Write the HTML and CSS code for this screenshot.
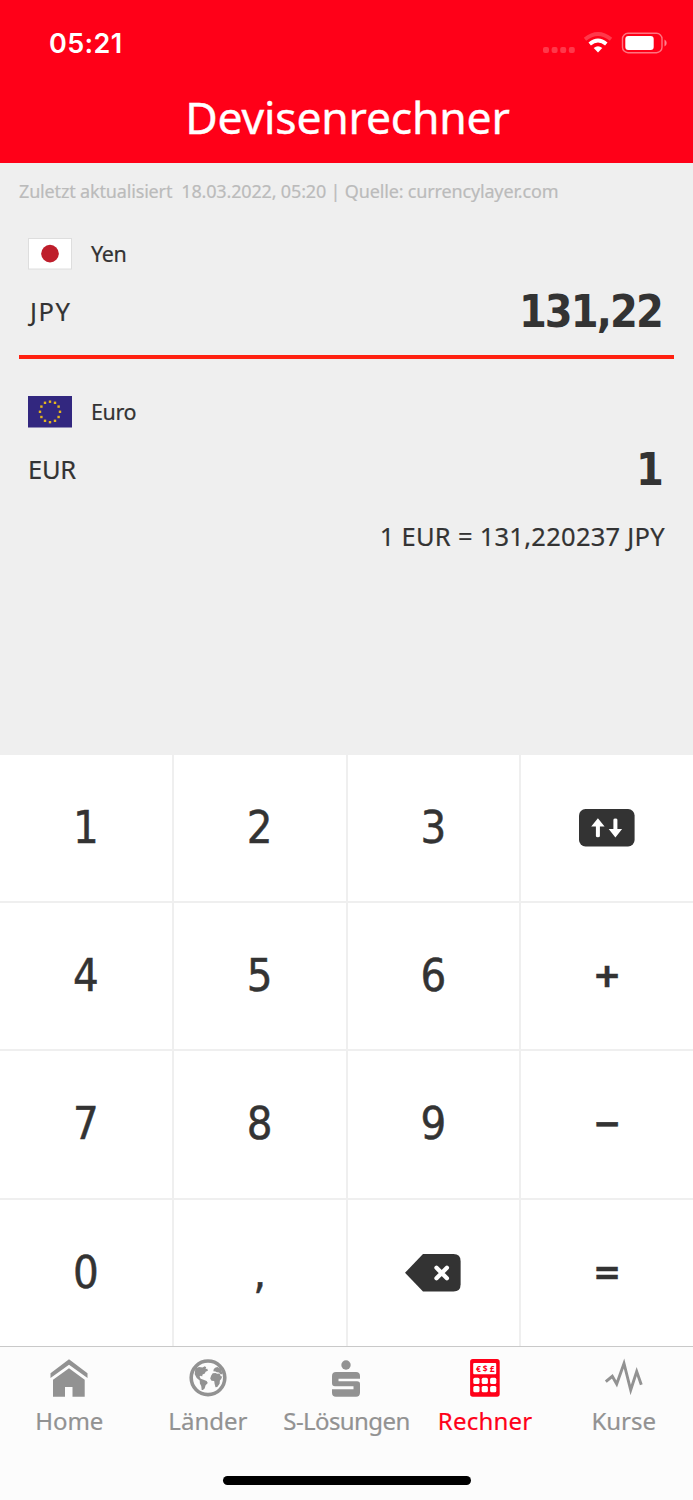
FILE: index.html
```html
<!DOCTYPE html>
<html lang="de">
<head>
<meta charset="utf-8">
<title>Devisenrechner</title>
<link rel="stylesheet" href="styles.css">
</head>
<body>
<div class="app">
  <header class="header">
    <div class="status">
      <span class="time">05:21</span>
      <svg class="status-icons" width="126" height="26" viewBox="0 0 126 26">
        <g fill="#fff" fill-opacity=".22"><rect x="2" y="17" width="6" height="6" rx="2"/><rect x="10.6" y="17" width="6" height="6" rx="2"/><rect x="19.2" y="17" width="6" height="6" rx="2"/><rect x="27.8" y="17" width="6" height="6" rx="2"/></g>
        <g fill="none" stroke="#fff" stroke-width="3.8"><path d="M44 9.3Q57 -1.2 70 9.3" stroke-opacity=".22"/><path d="M48.7 14Q57 7 65.3 14"/></g>
        <path fill="#fff" d="M52.7 18Q57 14.6 61.3 18L57 22.5Z"/>
        <rect x="81.5" y="3.3" width="39.5" height="19.4" rx="5.5" fill="none" stroke="#fff" stroke-opacity=".45" stroke-width="1.4"/>
        <rect x="84.3" y="6" width="28.4" height="14" rx="3" fill="#fff"/>
        <path d="M123.5 9.5q2.2 1 2.2 3.5t-2.2 3.5z" fill="#fff" fill-opacity=".5"/>
      </svg>
    </div>
    <h1 class="title">Devisenrechner</h1>
  </header>
  <main class="rates">
    <p class="meta">Zuletzt aktualisiert&nbsp; 18.03.2022, 05:20 | Quelle: currencylayer.com</p>
    <section class="currency active">
      <div class="name-row">
        <svg class="flag" width="44" height="32" viewBox="0 0 44 32"><rect x=".5" y=".5" width="43" height="30.5" fill="#fff" stroke="#dedede"/><circle cx="22" cy="15.6" r="8.8" fill="#be1e2b"/></svg>
        <span class="name yen">Yen</span>
      </div>
      <div class="value-row"><span class="code jpy">JPY</span><span class="amount">131,22</span></div>
    </section>
    <section class="currency">
      <div class="name-row">
        <svg class="flag" width="44" height="32" viewBox="0 0 44 32"><rect width="44" height="31.5" fill="#32277f"/>
          <g fill="#e3b620"><rect x="20.8" y="4.5" width="2.4" height="2.4"/><rect x="25.8" y="5.6" width="2.4" height="2.4"/><rect x="29.4" y="9.4" width="2.4" height="2.4"/><rect x="30.8" y="14.6" width="2.4" height="2.4"/><rect x="29.4" y="19.8" width="2.4" height="2.4"/><rect x="25.8" y="23.6" width="2.4" height="2.4"/><rect x="20.8" y="25" width="2.4" height="2.4"/><rect x="15.8" y="23.6" width="2.4" height="2.4"/><rect x="12.2" y="19.8" width="2.4" height="2.4"/><rect x="10.8" y="14.6" width="2.4" height="2.4"/><rect x="12.2" y="9.4" width="2.4" height="2.4"/><rect x="15.8" y="5.6" width="2.4" height="2.4"/></g></svg>
        <span class="name euro">Euro</span>
      </div>
      <div class="value-row"><span class="code eur">EUR</span><span class="amount">1</span></div>
    </section>
    <p class="rate">1 EUR = 131,220237 JPY</p>
  </main>
  <div class="keypad">
    <button class="key">1</button><button class="key">2</button><button class="key">3</button>
    <button class="key" aria-label="Tauschen"><svg width="56" height="38" viewBox="0 0 56 38"><rect width="55.6" height="37.5" rx="6.5" fill="#333"/><g fill="#fff"><path d="M18.9 9.2L25.6 17.6H20.9V27q0 1.2-2 1.2t-2-1.2V17.6H12.2Z"/><path d="M36.4 28.5L43.1 20.1H38.4V10.7q0-1.2-2-1.2t-2 1.2V20.1H29.7Z"/></g></svg></button>
    <button class="key">4</button><button class="key">5</button><button class="key">6</button><button class="key op">+</button>
    <button class="key">7</button><button class="key">8</button><button class="key">9</button><button class="key op">−</button>
    <button class="key">0</button><button class="key">,</button>
    <button class="key" aria-label="Löschen"><svg width="56" height="38" viewBox="0 0 56 38"><path d="M0 18.8L18 0H48.5Q55.6 0 55.6 7V30.5Q55.6 37.5 48.5 37.5H18Z" fill="#333"/><path d="M31.5 13.8l10.4 10.4M41.9 13.8L31.5 24.2" stroke="#fff" stroke-width="4.3" stroke-linecap="round"/></svg></button>
    <button class="key op">=</button>
  </div>
  <nav class="tabs">
    <a class="tab"><svg width="40" height="40" viewBox="0 0 40 40" fill="#929292"><path d="M20 1.3L38.5 15.3V20L20 6.7L1.5 20V15.3Z"/><path d="M20 10.3L35.7 21.7V38.7H23.5V29H16V38.7H4V21.7Z"/></svg><span class="label home">Home</span></a>
    <a class="tab"><svg width="40" height="40" viewBox="0 0 40 40" fill="#929292"><circle cx="20" cy="19.8" r="16.8" fill="none" stroke="#929292" stroke-width="3.6"/><path d="M7.3 10.5L11 9l3.5.6 2.3-1.3 1.4.9-.6 1.8 1.7-.3.6 2-2.3 1-.8 1.8-2.2 1-.5 2-1.2-.8-1.4.8 1.2 2.2 2.2.8 3.7 1.6 1.2 2-2.2 2.2-1 3.2-1.7 1.6-1.2-.2-.5-4-1.3-2.5-.2-2.8-3-2.6-2-3.8z"/><path d="M23.2 17.5l1.5-2.2 2.8-.3 1.6.8 2.4-.2 1.3 2.6 1.4.4-1 2.5-1.3 1.4-.3 3.3-2.3 3.2-1.8.3-.9-3.6-.4-2.8-2.7-.2-1.3-2.2z"/><path d="M25.3 13.3l.5-2.2 1.8-1.6 1.9-.6 3.6 2.2 1.3 4.8-1.6.7-1.8-2-2.3-.3-1.2-.9z"/></svg><span class="label laender">Länder</span></a>
    <a class="tab"><svg width="40" height="40" viewBox="0 0 40 40" fill="#929292"><circle cx="20" cy="7" r="4.7"/><path d="M10 14H30Q34 14 34 18V20.7H12.5V23.2H31Q34 23.2 34 26V34.5Q34 38.7 30 38.7H10Q6 38.7 6 34.7V31.3H27.5V28.3H9Q6 28.3 6 25V18Q6 14 10 14Z"/></svg><span class="label loesungen">S-Lösungen</span></a>
    <a class="tab selected"><svg width="40" height="40" viewBox="0 0 40 40"><rect x="5.1" y="1" width="29.6" height="37.7" rx="2.7" fill="#ff0018"/><g fill="#fff"><rect x="8.2" y="5" width="23" height="11.3" rx="1"/><rect x="8.3" y="19.7" width="6.2" height="6.2" rx="1.5"/><rect x="16.7" y="19.7" width="6.2" height="6.2" rx="1.5"/><rect x="25.1" y="19.7" width="6.2" height="6.2" rx="1.5"/><rect x="8.3" y="28" width="6.2" height="6.2" rx="1.5"/><rect x="16.7" y="28" width="6.2" height="6.2" rx="1.5"/><rect x="25.1" y="28" width="6.2" height="6.2" rx="1.5"/></g><text class="symbols" x="11" y="13.7" textLength="18.5">€$£</text></svg><span class="label rechner">Rechner</span></a>
    <a class="tab"><svg width="40" height="40" viewBox="0 0 40 40"><path d="M1.8 23.7L8.3 18.3L12.7 26L20 5.5L26.7 32L32.7 13.5L37.3 26.7" fill="none" stroke="#929292" stroke-width="2.9" stroke-miterlimit="10"/></svg><span class="label kurse">Kurse</span></a>
  </nav>
  <div class="home-bar"></div>
</div>
</body>
</html>
```
FILE: styles.css
```css
* { box-sizing: border-box; margin: 0; padding: 0; }
body { background: #fcfcfc; font-family: "Noto Sans", sans-serif; color: #333; }
.app { width: 693px; height: 1500px; display: flex; flex-direction: column; }
svg { display: block; flex: none; }

.header { height: 163px; background: #ff0018; color: #fff; }
.status { height: 86px; padding: 0 26px 0 49px; display: flex; align-items: center; justify-content: space-between; }
.time { font: 600 27px/30px Inter, sans-serif; letter-spacing: .4px; padding-top: 1px; }
.title { text-align: center; font-size: 44.5px; font-weight: 400; line-height: 62px; letter-spacing: -.2px; padding-left: 2px; -webkit-text-stroke: .4px; }

.rates { height: 591.5px; background: #efefef; padding: 13px 19px 0; }
.meta { font-size: 18px; line-height: 30px; color: #bbb; white-space: nowrap; letter-spacing: -.16px; -webkit-text-stroke: .2px; }
.currency { height: 158px; padding: 32px 9px 0; }
.currency.active { height: 153px; border-bottom: 4px solid #ff2010; }
.currency.active + .currency { padding-top: 37px; }
.name-row { display: flex; align-items: center; gap: 19px; height: 32px; }
.name { font-size: 21.5px; line-height: 32px; letter-spacing: -.4px; -webkit-text-stroke: .2px; }
.value-row { display: flex; align-items: center; justify-content: space-between; height: 52px; margin-top: 16px; }
.code { font-size: 25.5px; padding-bottom: 3px; -webkit-text-stroke: .2px; }
.jpy { letter-spacing: 1.6px; padding-left: 2px; }
.eur { letter-spacing: -.3px; }
.amount { font: 700 44.5px/52px "DejaVu Sans Condensed", "DejaVu Sans", sans-serif; font-stretch: condensed; letter-spacing: -1.9px; padding-right: 3px; }
.rate { text-align: right; font-size: 25.5px; line-height: 36px; letter-spacing: .27px; padding-right: 9px; margin-top: 1px; -webkit-text-stroke: .2px; }

.keypad { height: 591.5px; display: grid; grid-template: repeat(4, 1fr) / repeat(4, 1fr); gap: 2px; background: #efefef; }
.key { border: 0; background: #fff; color: #333; display: flex; align-items: center; justify-content: center; font: 400 45px/52px "DejaVu Sans Condensed", "DejaVu Sans", sans-serif; font-stretch: condensed; -webkit-text-stroke: .5px; }
.key.op { font: 600 44px/52px "Noto Sans", sans-serif; padding-bottom: 3px; }

.tabs { height: 96px; border-top: 1px solid #c9c9c9; padding-top: 11px; display: grid; grid-template-columns: repeat(5, 1fr); }
.tab { display: flex; flex-direction: column; align-items: center; color: #929292; }
.label { font-size: 24px; line-height: 34px; margin-top: 6px; white-space: nowrap; -webkit-text-stroke: .2px; }
.home { letter-spacing: -.1px; }
.loesungen { letter-spacing: -.6px; }
.rechner { letter-spacing: .2px; }
.selected { color: #ff0018; }
.symbols { font: 700 8.5px "Noto Sans", sans-serif; fill: #ff0018; }
.home-bar { width: 248px; height: 9px; border-radius: 5px; background: #000; margin: 34px auto 0; }
```
